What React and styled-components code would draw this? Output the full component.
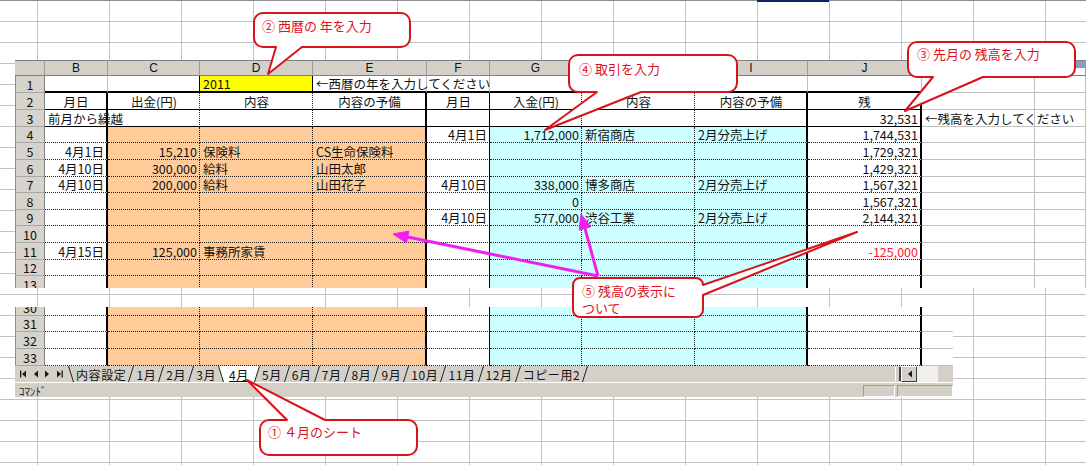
import React from "react";
import styled, { createGlobalStyle } from "styled-components";

const GlobalStyle = createGlobalStyle`
  html, body {
    margin: 0;
    padding: 0;
    background: #fff;
  }
`;

const FONT = `"Noto Sans CJK JP", "Liberation Sans", sans-serif`;
const TEMPLATE = "30px 63px 92px 113px 114px 63px 92px 113px 113px 114px 113px 1fr";
const COLS = ["B", "C", "D", "E", "F", "G", "H", "I", "J", "K", "L"];

const LINE = {
  grid: "1px solid #c0c0c0",
  dot: "1px dotted #1c1c1c",
  thin: "1px solid #000",
  thick: "2px solid #000",
};

const TABLE_RIGHT = { B: "thick", C: "dot", D: "dot", E: "thick", F: "thin", G: "dot", H: "dot", I: "thick", J: "thick" };
const ALIGN = { B: "right", C: "right", D: "left", E: "left", F: "right", G: "right", H: "left", I: "left", J: "right", K: "left", L: "left" };
const JUSTIFY = { left: "flex-start", center: "center", right: "flex-end" };

const rightBorder = (n, col) => {
  if (n === 1) return col === "C" || col === "D" ? "thin" : "grid";
  return TABLE_RIGHT[col] || "grid";
};

const bottomBorder = (n, col) => {
  if (!TABLE_RIGHT[col]) return "grid";
  if (n === 1) return "thick";
  if (n <= 3) return "thin";
  return "dot";
};

const fill = (n, col) => {
  if (n === 1 && col === "D") return "#ffff00";
  if (n >= 4 && ["C", "D", "E"].includes(col)) return "#ffcc99";
  if (n >= 4 && ["G", "H", "I"].includes(col)) return "#ccffff";
  return "#fff";
};

const mid = (t) => ({ t, a: "center" });

const TOP_ROWS = [
  { n: 1, h: 17, c: { D: { t: "2011", a: "left" }, E: { t: "←西暦の年を入力してください", over: true } } },
  {
    n: 2,
    h: 17,
    c: {
      B: mid("月日"), C: mid("出金(円)"), D: mid("内容"), E: mid("内容の予備"),
      F: mid("月日"), G: mid("入金(円)"), H: mid("内容"), I: mid("内容の予備"), J: mid("残"),
    },
  },
  { n: 3, h: 17, c: { B: { t: "前月から繰越", a: "left", over: true }, J: "32,531", K: { t: "←残高を入力してください", over: true } } },
  { n: 4, h: 16, c: { F: "4月1日", G: "1,712,000", H: "新宿商店", I: "2月分売上げ", J: "1,744,531" } },
  { n: 5, h: 17, c: { B: "4月1日", C: "15,210", D: "保険料", E: "CS生命保険料", J: "1,729,321" } },
  { n: 6, h: 17, c: { B: "4月10日", C: "300,000", D: "給料", E: "山田太郎", J: "1,429,321" } },
  { n: 7, h: 16, c: { B: "4月10日", C: "200,000", D: "給料", E: "山田花子", F: "4月10日", G: "338,000", H: "博多商店", I: "2月分売上げ", J: "1,567,321" } },
  { n: 8, h: 17, c: { G: "0", J: "1,567,321" } },
  { n: 9, h: 16, c: { F: "4月10日", G: "577,000", H: "渋谷工業", I: "2月分売上げ", J: "2,144,321" } },
  { n: 10, h: 17, c: {} },
  { n: 11, h: 17, c: { B: "4月15日", C: "125,000", D: "事務所家賃", J: { t: "-125,000", color: "#ff1a2e" } } },
  { n: 12, h: 16, c: {} },
  { n: 13, h: 17, c: {} },
];

const BOTTOM_ROWS = [
  { n: 30, h: 17, c: {} },
  { n: 31, h: 16, c: {} },
  { n: 32, h: 17, c: {} },
  { n: 33, h: 17, c: {} },
];

const TABS = ["内容設定", "1月", "2月", "3月", "4月", "5月", "6月", "7月", "8月", "9月", "10月", "11月", "12月", "コピー用2"];

const Page = styled.div`
  position: relative;
  width: 1086px;
  height: 465px;
  overflow: hidden;
  box-sizing: border-box;
  padding: 60px 0 0 15px;
  font-family: ${FONT};
  background-color: #fff;
  background-image: linear-gradient(#8c8c8c, #8c8c8c),
    linear-gradient(to right, #c2c2c2 1px, transparent 1px),
    linear-gradient(to bottom, #c2c2c2 1px, transparent 1px);
  background-size: 100% 1px, 72px 21px, 72px 21px;
  background-repeat: no-repeat, repeat, repeat;
  background-position: 0 0, 37px 0, 0 0;
`;

const Selection = styled.div`
  position: absolute;
  left: 757px;
  top: 0;
  width: 72px;
  height: 2px;
  background: #0c2466;
`;

const TopSheet = styled.div`
  width: 1071px;
  height: 228px;
  overflow: hidden;
  background: #fff;
`;

const BottomSheet = styled.div`
  margin-top: 19px;
  width: 938px;
  height: 90px;
  overflow: hidden;
  background: #fff;
  display: flex;
  flex-direction: column;
`;

const RowsWindow = styled.div`
  height: 59px;
  overflow: hidden;
  flex: none;
`;

const RowsShift = styled.div`
  margin-top: -8px;
`;

const Row = styled.div`
  display: grid;
  grid-template-columns: ${TEMPLATE};
  grid-template-rows: ${(p) => p.$h}px;
  height: ${(p) => p.$h}px;
`;

const HeadCell = styled.div`
  box-sizing: border-box;
  min-height: 0;
  background: ${(p) => p.$bg || "#d4d0c8"};
  border-top: 1px solid #808080;
  border-right: 1px solid #9c9a94;
  border-bottom: 1px solid #808080;
  display: flex;
  align-items: center;
  justify-content: center;
  font-family: "Liberation Sans", sans-serif;
  font-size: 12px;
  line-height: 14px;
  color: #111;
`;

const RowHead = styled.div`
  box-sizing: border-box;
  min-height: 0;
  background: #d6d3cd;
  border-left: 1px solid #8c8c8c;
  border-right: 1px solid #808080;
  border-bottom: 1px solid #a9a7a1;
  display: flex;
  align-items: center;
  justify-content: center;
  font-size: 12.5px;
  line-height: 15px;
  color: #111;
`;

const Cell = styled.div`
  box-sizing: border-box;
  min-height: 0;
  position: relative;
  z-index: ${(p) => (p.$over ? 2 : "auto")};
  background: ${(p) => p.$bg};
  border-right: ${(p) => LINE[p.$right]};
  border-bottom: ${(p) => LINE[p.$bottom]};
  display: flex;
  align-items: center;
  justify-content: ${(p) => JUSTIFY[p.$align]};
  padding: 0 2px 0 3px;
  font-size: 12.5px;
  line-height: 15px;
  white-space: nowrap;
  color: ${(p) => p.$color || "#111"};
`;

const TabBar = styled.div`
  height: 16px;
  flex: none;
  display: flex;
  align-items: stretch;
  background: #d4d0c8;
  font-size: 12px;
  color: #111;
`;

const TabNav = styled.div`
  width: 53px;
  flex: none;
  display: flex;
  align-items: center;
  justify-content: space-around;
  padding: 0 2px;
  box-sizing: border-box;
`;

const Tabs = styled.div`
  display: flex;
  align-items: stretch;
`;

const Tab = styled.span`
  display: flex;
  align-items: center;
  padding: 0 ${(p) => (p.$active ? 5 : 2)}px;
  letter-spacing: 0.6px;
  background: ${(p) => (p.$active ? "#fff" : "transparent")};
  text-decoration: ${(p) => (p.$active ? "underline" : "none")};
  line-height: 15px;
  white-space: nowrap;
`;

const Spacer = styled.div`
  flex: 1;
`;

const SplitBar = styled.div`
  width: 3px;
  margin: 1px 0;
  border-left: 1px solid #fff;
  border-right: 2px solid #404040;
`;

const ScrollButton = styled.div`
  width: 16px;
  box-sizing: border-box;
  border: 1px solid;
  border-color: #fff #404040 #404040 #fff;
  display: flex;
  align-items: center;
  justify-content: center;
`;

const ScrollTrack = styled.div`
  width: 36px;
  background: linear-gradient(to right, #f0efec 0 21px, #d4d0c8 21px);
`;

const StatusBar = styled.div`
  height: 15px;
  flex: none;
  display: flex;
  align-items: center;
  border-top: 1px solid #fff;
  background: #d4d0c8;
  padding-left: 4px;
  font-size: 11px;
  line-height: 14px;
  color: #222;
`;

const StatusPanel = styled.div`
  width: ${(p) => p.$w}px;
  height: 12px;
  margin-left: 2px;
  box-sizing: border-box;
  border: 1px solid;
  border-color: #a09c94 #fff #fff #a09c94;
`;

const Overlay = styled.svg`
  position: absolute;
  left: 0;
  top: 0;
  z-index: 4;
  pointer-events: none;
`;

const Callout = styled.div`
  position: absolute;
  left: ${(p) => p.$x}px;
  top: ${(p) => p.$y}px;
  width: ${(p) => p.$w}px;
  height: ${(p) => p.$h}px;
  z-index: 5;
`;

const CalloutShape = styled.svg`
  position: absolute;
  left: 0;
  top: 0;
  overflow: visible;
`;

const CalloutText = styled.div`
  position: relative;
  padding: ${(p) => p.$pt}px 0 0 ${(p) => p.$pl}px;
  font-size: 13px;
  line-height: 17px;
  color: #e0101a;
  white-space: pre;
`;

// rounded rectangle with a wedge leaving one edge between a and b
const balloon = (w, h, r, side, a, b, tx, ty) => {
  let d = `M${r},0 `;
  if (side === "top") d += `H${a} L${tx},${ty} L${b},0 `;
  d += `H${w - r} A${r},${r} 0 0 1 ${w},${r} `;
  if (side === "right") d += `V${a} L${tx},${ty} L${w},${b} `;
  d += `V${h - r} A${r},${r} 0 0 1 ${w - r},${h} `;
  if (side === "bottom") d += `H${b} L${tx},${ty} L${a},${h} `;
  d += `H${r} A${r},${r} 0 0 1 0,${h - r} V${r} A${r},${r} 0 0 1 ${r},0 Z`;
  return d;
};

const CALLOUTS = [
  { x: 254, y: 13, w: 156, h: 34, r: 9, side: "bottom", a: 22, b: 48, tx: 14, ty: 61, pl: 8, pt: 4, text: "② 西暦の 年を入力" },
  { x: 569, y: 55, w: 168, h: 37, r: 9, side: "bottom", a: 28, b: 72, tx: -24, ty: 75, pl: 10, pt: 5, text: "④ 取引を入力" },
  { x: 908, y: 42, w: 167, h: 35, r: 9, side: "bottom", a: 25, b: 75, tx: -3, ty: 69, pl: 9, pt: 3, text: "③ 先月の 残高を入力" },
  { x: 573, y: 278, w: 130, h: 39, r: 7, side: "right", a: 7, b: 17, tx: 284, ty: -46, pl: 9, pt: 4, text: "⑤ 残高の表示に\nついて" },
  { x: 260, y: 420, w: 157, h: 35, r: 9, side: "top", a: 27, b: 65, tx: -13, ty: -40, pl: 8, pt: 3, text: "① ４月のシート" },
];

const ARROWS = [
  { x1: 598, y1: 276, x2: 393, y2: 234 },
  { x1: 598, y1: 276, x2: 581, y2: 214 },
];

const head = ({ x1, y1, x2, y2 }, len = 15, half = 6) => {
  const dx = x2 - x1;
  const dy = y2 - y1;
  const l = Math.hypot(dx, dy);
  const ux = dx / l;
  const uy = dy / l;
  const bx = x2 - ux * len;
  const by = y2 - uy * len;
  return {
    base: [bx, by],
    points: `${x2},${y2} ${bx - uy * half},${by + ux * half} ${bx + uy * half},${by - ux * half}`,
  };
};

const NavIcon = ({ dir, bar }) => (
  <svg width="7" height="8" viewBox="0 0 7 8" fill="#1a1a1a">
    {dir === "l" ? <polygon points="6,0.5 6,7.5 2,4" /> : <polygon points="1,0.5 1,7.5 5,4" />}
    {bar && <rect x={dir === "l" ? 0 : 5.5} y="0.5" width="1.3" height="7" />}
  </svg>
);

// slanted edge between two sheet tabs; "/" or "\" with optional white fill for the active tab
const TabEdge = ({ back, fillSide }) => (
  <svg width="6" height="16" viewBox="0 0 6 16" style={{ flex: "none" }}>
    {fillSide === "right" && <polygon points="0,0 6,0 6,16" fill="#fff" />}
    {fillSide === "left" && <polygon points="0,0 6,0 0,16" fill="#fff" />}
    {back ? (
      <line x1="0.5" y1="0" x2="5.5" y2="16" stroke="#222" strokeWidth="1" />
    ) : (
      <line x1="0.5" y1="16" x2="5.5" y2="0" stroke="#222" strokeWidth="1" />
    )}
  </svg>
);

const SheetRow = ({ row }) => (
  <Row $h={row.h}>
    <RowHead>{row.n}</RowHead>
    {COLS.map((col) => {
      const raw = row.c[col];
      const v = typeof raw === "string" ? { t: raw } : raw || {};
      return (
        <Cell
          key={col}
          $bg={fill(row.n, col)}
          $right={rightBorder(row.n, col)}
          $bottom={bottomBorder(row.n, col)}
          $align={v.a || ALIGN[col]}
          $over={v.over}
          $color={v.color}
        >
          {v.t}
        </Cell>
      );
    })}
  </Row>
);

const App = () => {
  const activeIndex = 4;
  return (
    <Page>
      <GlobalStyle />
      <Selection />
      <TopSheet>
        <Row $h={16}>
          <HeadCell />
          {COLS.map((col) => (
            <HeadCell key={col} $bg={col === "L" ? "linear-gradient(#8b9cc4 0 7px, #fff 7px)" : undefined}>
              {col === "L" ? "" : col}
            </HeadCell>
          ))}
        </Row>
        {TOP_ROWS.map((row) => (
          <SheetRow key={row.n} row={row} />
        ))}
      </TopSheet>

      <BottomSheet>
        <RowsWindow>
          <RowsShift>
            {BOTTOM_ROWS.map((row) => (
              <SheetRow key={row.n} row={row} />
            ))}
          </RowsShift>
        </RowsWindow>
        <TabBar>
          <TabNav>
            <NavIcon dir="l" bar />
            <NavIcon dir="l" />
            <NavIcon dir="r" />
            <NavIcon dir="r" bar />
          </TabNav>
          <Tabs>
            {TABS.map((name, i) => (
              <React.Fragment key={name}>
                <TabEdge
                  back={i === 0 || i === activeIndex}
                  fillSide={i === activeIndex ? "right" : i === activeIndex + 1 ? "left" : undefined}
                />
                <Tab $active={i === activeIndex}>{name}</Tab>
              </React.Fragment>
            ))}
            <TabEdge />
          </Tabs>
          <Spacer />
          <SplitBar />
          <ScrollButton>
            <NavIcon dir="l" />
          </ScrollButton>
          <ScrollTrack />
        </TabBar>
        <StatusBar>
          ｺﾏﾝﾄﾞ
          <Spacer />
          <StatusPanel $w={32} />
          <StatusPanel $w={56} />
        </StatusBar>
      </BottomSheet>

      <Overlay width="1086" height="465" viewBox="0 0 1086 465">
        {ARROWS.map((ar, i) => {
          const h = head(ar);
          return (
            <g key={i} fill="#f01ef0" stroke="#f01ef0">
              <line x1={ar.x1} y1={ar.y1} x2={h.base[0]} y2={h.base[1]} strokeWidth="3" />
              <polygon points={h.points} strokeWidth="1" />
            </g>
          );
        })}
      </Overlay>

      {CALLOUTS.map((c) => (
        <Callout key={c.text} $x={c.x} $y={c.y} $w={c.w} $h={c.h}>
          <CalloutShape width={c.w} height={c.h}>
            <path
              d={balloon(c.w, c.h, c.r, c.side, c.a, c.b, c.tx, c.ty)}
              fill="#fff"
              stroke="#d7141c"
              strokeWidth="2"
              strokeLinejoin="round"
            />
          </CalloutShape>
          <CalloutText $pl={c.pl} $pt={c.pt}>
            {c.text}
          </CalloutText>
        </Callout>
      ))}
    </Page>
  );
};

export default App;
